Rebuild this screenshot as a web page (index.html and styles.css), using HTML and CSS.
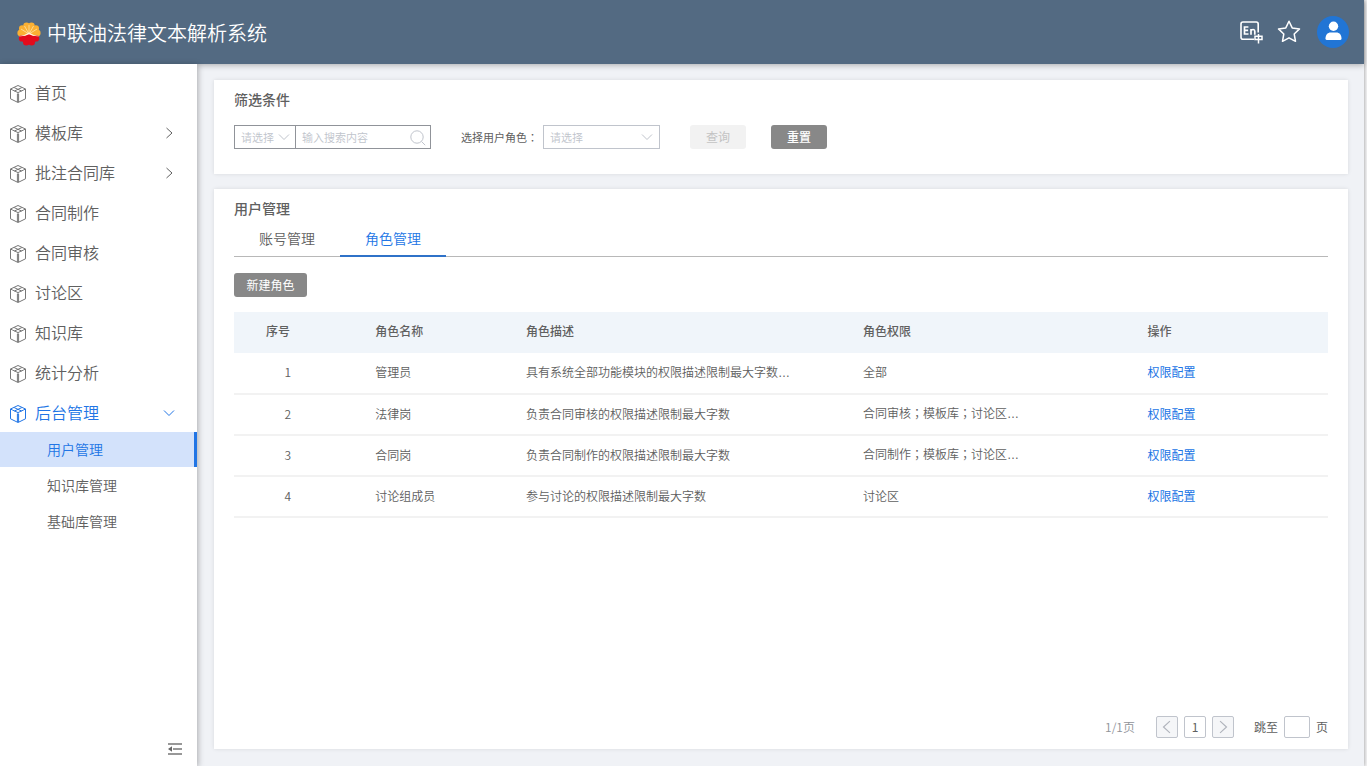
FILE: index.html
```html
<!DOCTYPE html>
<html lang="zh-CN">
<head>
<meta charset="utf-8">
<title>中联油法律文本解析系统</title>
<link rel="stylesheet" href="styles.css">
</head>
<body>
<svg class="defs" aria-hidden="true">
  <symbol id="cube" viewBox="0 0 18 20">
    <path d="M9 1.500 16.500 5v9.800L9 18.500 1.500 14.800V5z M3.500 6 9 8.600 14.500 6 M8.400 10v8 M9.600 10v8 M9 8.600v2 M5.200 3.600 12.600 7 M12.800 3.600 5.400 7 M1.500 5l2 1 M16.500 5l-2 1"/>
  </symbol>
  <symbol id="right" viewBox="0 0 12 12"><path d="M3.500 1 9 6l-5.500 5"/></symbol>
  <symbol id="left" viewBox="0 0 12 12"><path d="M8.500 1 3 6l5.500 5"/></symbol>
  <symbol id="down" viewBox="0 0 12 12"><path d="M1 3.500 6 8.500l5-5"/></symbol>
</svg>
<div class="app">
  <header class="header">
    <svg class="logo" viewBox="0 0 24 24" aria-hidden="true">
      <g fill="#fbb033">
        <circle cx="9.500" cy="3.800" r="3.200"/><circle cx="14.500" cy="3.800" r="3.200"/>
        <circle cx="5.200" cy="6.500" r="3.200"/><circle cx="18.800" cy="6.500" r="3.200"/>
        <circle cx="3.600" cy="11" r="3.200"/><circle cx="20.400" cy="11" r="3.200"/><circle cx="12" cy="10" r="7"/>
      </g>
      <g fill="#e30b1c">
        <circle cx="4.900" cy="16.400" r="3.100"/><circle cx="19.100" cy="16.400" r="3.100"/>
        <circle cx="9.300" cy="20.200" r="3.300"/><circle cx="14.700" cy="20.200" r="3.300"/>
        <path d="M2.500 14.800q5 0 9.500-3 4.500 3 9.500 3L18 20H6z"/>
      </g>
      <path d="M12 12V3M12 12 7.500 4M12 12l4.500-8M12 12 4 7M12 12l8-5" stroke="#fde9b8" stroke-width=".7"/>
      <path d="M1.500 14.200q6-.4 10.500-3.700 4.500 3.300 10.500 3.700-6 .6-10.500-2-4.500 2.600-10.500 2z" fill="#fff3df"/>
    </svg>
    <h1 class="title">中联油法律文本解析系统</h1>
    <button class="icon-btn lang" aria-label="语言">
      <svg viewBox="0 0 24 24" width="24" height="24" fill="none" stroke="#fff" stroke-width="1.600">
        <path d="M15 19.200H4a2 2 0 0 1-2-2V4a2 2 0 0 1 2-2h13.200a2 2 0 0 1 2 2v8.500"/>
        <path d="M9.400 7H5.500v7h4M5.500 10.400h3.600M12 14.700V9M12 11q.6-1.600 2.200-1.500 1.600.1 1.600 1.800v3.400" stroke-width="1.700"/>
        <path d="M16 16.300h7v3.200h-7zM19.500 14v9.500" stroke-width="1.500"/>
      </svg>
    </button>
    <button class="icon-btn star" aria-label="收藏">
      <svg viewBox="0 0 24 24" width="24" height="24" fill="none" stroke="#fff" stroke-width="1.500" stroke-linejoin="round"><path d="m12 1.200 3.200 6.700 7.300 1-5.300 5.100 1.300 7.300L12 17.800l-6.500 3.500 1.300-7.300L1.500 8.900l7.300-1z"/></svg>
    </button>
    <button class="icon-btn avatar" aria-label="用户">
      <svg viewBox="0 0 32 32" width="32" height="32"><circle cx="16" cy="16" r="16" fill="#2175d5"/><circle cx="16.500" cy="10.200" r="4.700" fill="#fff"/><path d="M8.500 22.500c0-4 2.500-6 5-6h6c2.500 0 5 2 5 6q0 1.500-1.500 1.500H10q-1.500 0-1.500-1.500z" fill="#fff"/></svg>
    </button>
  </header>
  <div class="body">
    <nav class="sidebar">
      <ul class="menu">
        <li><a class="item" href="#"><svg class="cube"><use href="#cube"/></svg>首页</a></li>
        <li><a class="item" href="#"><svg class="cube"><use href="#cube"/></svg>模板库<svg class="arrow"><use href="#right"/></svg></a></li>
        <li><a class="item" href="#"><svg class="cube"><use href="#cube"/></svg>批注合同库<svg class="arrow"><use href="#right"/></svg></a></li>
        <li><a class="item" href="#"><svg class="cube"><use href="#cube"/></svg>合同制作</a></li>
        <li><a class="item" href="#"><svg class="cube"><use href="#cube"/></svg>合同审核</a></li>
        <li><a class="item" href="#"><svg class="cube"><use href="#cube"/></svg>讨论区</a></li>
        <li><a class="item" href="#"><svg class="cube"><use href="#cube"/></svg>知识库</a></li>
        <li><a class="item" href="#"><svg class="cube"><use href="#cube"/></svg>统计分析</a></li>
        <li><a class="item open" href="#"><svg class="cube"><use href="#cube"/></svg>后台管理<svg class="arrow"><use href="#down"/></svg></a>
          <ul class="submenu">
            <li><a class="sub current" href="#">用户管理</a></li>
            <li><a class="sub" href="#">知识库管理</a></li>
            <li><a class="sub" href="#">基础库管理</a></li>
          </ul>
        </li>
      </ul>
      <button class="collapse" aria-label="收起菜单">
        <svg viewBox="0 0 14 12" width="14" height="12"><path d="M0 1h14M5 6h9M0 11h14" stroke="#777" stroke-width="1.400"/><path d="M0 6l4-2.800v5.600z" fill="#666"/></svg>
      </button>
    </nav>
    <main class="content">
      <section class="card">
        <h2 class="card-title">筛选条件</h2>
        <form class="filters">
          <div class="search">
            <div class="select-wrap type">
              <select aria-label="搜索类型"><option>请选择</option></select>
              <svg class="chev"><use href="#down"/></svg>
            </div>
            <input type="text" placeholder="输入搜索内容" aria-label="搜索内容">
            <svg class="glass" viewBox="0 0 16 16"><circle cx="7" cy="7" r="6.200"/><path d="m11.500 11.500 3.700 3.700"/></svg>
          </div>
          <label class="role-label" for="role">选择用户角色<span class="punct" lang="zh-TW">：</span></label>
          <div class="select-wrap role">
            <select id="role"><option>请选择</option></select>
            <svg class="chev"><use href="#down"/></svg>
          </div>
          <button class="btn query" type="button" disabled>查询</button>
          <button class="btn reset" type="button">重置</button>
        </form>
      </section>
      <section class="card main-card">
        <h2 class="card-title">用户管理</h2>
        <div class="tabs" role="tablist">
          <button class="tab" role="tab">账号管理</button>
          <button class="tab active" role="tab" aria-selected="true">角色管理</button>
        </div>
        <button class="btn create">新建角色</button>
        <table class="roles">
          <thead>
            <tr><th class="c-no">序号</th><th class="c-name">角色名称</th><th class="c-desc">角色描述</th><th class="c-perm">角色权限</th><th>操作</th></tr>
          </thead>
          <tbody>
            <tr><td class="no"><span>1</span></td><td>管理员</td><td>具有系统全部功能模块的权限描述限制最大字数<span class="dots">…</span></td><td>全部</td><td><a href="#">权限配置</a></td></tr>
            <tr><td class="no"><span>2</span></td><td>法律岗</td><td>负责合同审核的权限描述限制最大字数</td><td>合同审核<span class="punct" lang="zh-TW">；</span>模板库<span class="punct" lang="zh-TW">；</span>讨论区<span class="dots">…</span></td><td><a href="#">权限配置</a></td></tr>
            <tr><td class="no"><span>3</span></td><td>合同岗</td><td>负责合同制作的权限描述限制最大字数</td><td>合同制作<span class="punct" lang="zh-TW">；</span>模板库<span class="punct" lang="zh-TW">；</span>讨论区<span class="dots">…</span></td><td><a href="#">权限配置</a></td></tr>
            <tr><td class="no"><span>4</span></td><td>讨论组成员</td><td>参与讨论的权限描述限制最大字数</td><td>讨论区</td><td><a href="#">权限配置</a></td></tr>
          </tbody>
        </table>
        <div class="pager">
          <span class="total">1/1页</span>
          <button class="page off" aria-label="上一页"><svg><use href="#left"/></svg></button>
          <button class="page">1</button>
          <button class="page off" aria-label="下一页"><svg><use href="#right"/></svg></button>
          <label class="jump" for="jump">跳至</label>
          <input id="jump" class="jump-input" type="text">
          <span>页</span>
        </div>
      </section>
    </main>
  </div>
</div>
</body>
</html>
```
FILE: styles.css
```css
* { box-sizing: border-box; }
body {
  margin: 0;
  background: #f4f4f5;
  color: #606060;
  font: 12px/18px "Noto Sans CJK SC", sans-serif;
}
ul { list-style: none; margin: 0; padding: 0; }
a { text-decoration: none; color: inherit; }
button, input, select { font: inherit; color: inherit; margin: 0; }
button { cursor: pointer; padding: 0; border: 0; background: none; }
.defs { display: none; }
.punct { font-family: "Noto Sans CJK TC", sans-serif; }
.dots { font-family: "Liberation Sans", sans-serif; }

.app {
  min-height: 100vh;
  margin-right: 3px;
  display: flex;
  flex-direction: column;
  background: #f0f2f6;
  box-shadow: 0 0 4px rgba(0, 0, 0, .4);
}

.header {
  height: 64px;
  display: flex;
  align-items: center;
  padding: 0 15px 0 17px;
  background: #536a82;
  box-shadow: 0 1px 6px rgba(0, 0, 0, .3);
  z-index: 2;
}
.logo { width: 24px; height: 24px; margin: 3px 6px 0 0; fill: none; }
.title { flex: 1; margin: 0; padding-top: 1px; font-size: 20px; line-height: 30px; font-weight: 350; color: #fff; }
.icon-btn { display: flex; }
.star { margin: 0 16px 0 14px; }

.body { flex: 1; display: flex; }
.sidebar {
  width: 197px;
  flex: none;
  display: flex;
  flex-direction: column;
  justify-content: space-between;
  padding: 8px 0 11px;
  background: #fff;
  box-shadow: 1px 1px 6px rgba(0, 0, 0, .3);
  z-index: 3;
}
.item {
  height: 40px;
  display: flex;
  align-items: center;
  padding: 0 22px 0 9px;
  font-size: 16px;
  font-weight: 350;
}
.cube { width: 18px; height: 20px; margin: 4px 8px 0 0; fill: none; stroke: #777; stroke-width: 1; }
.arrow { width: 12px; height: 12px; margin: 2px 0 0 auto; fill: none; stroke: #606060; stroke-width: 1; }
.open { color: #2175e5; }
.open svg { stroke: #2175e5; }
.submenu { display: grid; gap: 1px; }
.sub {
  display: block;
  padding-left: 47px;
  font-size: 14px;
  font-weight: 350;
  line-height: 35px;
}
.current { color: #2175e5; background: #d3e2fb; border-right: 3px solid #2175e5; }
.collapse { align-self: flex-end; display: flex; margin-right: 15px; }

.content {
  flex: 1;
  min-width: 0;
  display: flex;
  flex-direction: column;
  gap: 15px;
  padding: 16px 16px 17px 17px;
}
.card { padding: 9px 20px 25px; background: #fff; box-shadow: 0 0 4px rgba(0, 0, 0, .1); }
.card-title { margin: 0; font-size: 14px; line-height: 20px; font-weight: 500; }
.filters { display: flex; align-items: center; margin-top: 16px; }
.search { position: relative; display: flex; width: 197px; height: 24px; border: 1px solid #909399; }
.search input {
  flex: 1;
  min-width: 0;
  border: 0;
  border-left: 1px solid #909399;
  padding: 0 24px 0 6px;
  font-size: 11px;
  outline: 0;
}
::placeholder { color: #c0c4cc; font-weight: 350; opacity: 1; }
.glass { position: absolute; right: 4px; top: 4px; width: 16px; height: 16px; fill: none; stroke: #c0c4cc; }
.select-wrap { position: relative; height: 24px; }
.select-wrap select {
  width: 100%;
  height: 100%;
  appearance: none;
  border: 0;
  padding: 0 6px;
  background: none;
  color: #c0c4cc;
  font-size: 11px;
  font-weight: 350;
  outline: 0;
}
.chev { position: absolute; right: 6px; top: 5px; width: 12px; height: 12px; fill: none; stroke: #c0c4cc; pointer-events: none; }
.type { width: 60px; height: 22px; }
.type .chev { right: 5px; }
.role { width: 117px; border: 1px solid #c0c4cc; }
.role-label { margin: 0 5px 0 30px; font-size: 11px; }
.btn { height: 24px; border-radius: 3px; color: #fff; background: #888; }
.query { width: 56px; margin: 0 25px 0 30px; background: #f2f2f2; color: #c3c3c3; }
.reset { width: 56px; font-weight: 500; }

.main-card { flex: 1; display: flex; flex-direction: column; align-items: stretch; padding-bottom: 11px; }
.tabs { display: flex; margin-top: 6px; border-bottom: 1px solid #b8b8b8; }
.tab {
  height: 33px;
  margin-bottom: -1px;
  padding: 0 25px 3px;
  border-bottom: 2px solid transparent;
  font-size: 14px;
  font-weight: 350;
}
.active { color: #2175e5; border-color: #2f72c8; }
.create { width: 73px; margin: 16px 0 15px; }

.roles { width: 100%; border-collapse: collapse; table-layout: fixed; text-align: left; }
.roles th { height: 41px; padding: 0 0 3px; background: #f0f5fa; font-weight: 500; }
.roles td { height: 41px; padding: 0 0 2px; border-bottom: 2px solid #f2f2f2; font-weight: 350; }
.roles .c-no, .roles .no { padding-left: 32px; }
.no span { display: block; width: 25px; text-align: right; }
.c-no { width: 12.9%; }
.c-name { width: 13.8%; }
.c-desc { width: 30.8%; }
.c-perm { width: 26%; }
.roles a { color: #2175e5; font-weight: 400; }

.pager { display: flex; align-items: center; justify-content: flex-end; gap: 6px; margin-top: auto; }
.total { margin-right: 15px; color: #909399; font-weight: 350; }
.page {
  width: 22px;
  height: 22px;
  display: flex;
  align-items: center;
  justify-content: center;
  border: 1px solid #c0c4cc;
  border-radius: 2px;
}
.page svg { width: 14px; height: 14px; fill: none; stroke: #b0b4bc; }
.off { background: #f5f6f8; }
.jump { margin-left: 14px; }
.jump-input { width: 26px; height: 22px; border: 1px solid #c0c4cc; border-radius: 2px; padding: 0 4px; }
```
